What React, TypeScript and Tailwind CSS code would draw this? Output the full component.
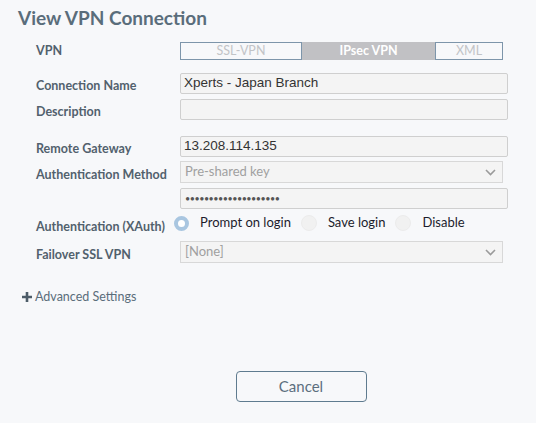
const lato = { fontFamily: 'Lato, "Open Sans", sans-serif' }

function Label({ children, className = 'pt-[5px]' }: { children?: React.ReactNode; className?: string }) {
  return (
    <div className={`w-[144px] shrink-0 text-[12.5px] font-bold leading-[14px] text-[#52616d] ${className}`}>{children}</div>
  )
}

function TextBox({ value = '' }: { value?: string }) {
  return (
    <div className="flex h-[21px] w-[328px] items-center rounded-[2px] border border-[#cfcfcf] bg-[#f4f4f4] px-[3px] text-[13.5px] text-[#333] [font-family:'Liberation_Sans',Arial,sans-serif]">
      {value}
    </div>
  )
}

function SelectBox({ value }: { value: string }) {
  return (
    <div className="flex h-[22px] w-[323px] items-center justify-between border border-[#d8d8d8] bg-[#f4f4f4] pl-[4px] pr-[6px] text-[13px] text-[#a0a0a0]">
      <span>{value}</span>
      <svg width="11" height="7" viewBox="0 0 11 7" fill="none">
        <path d="M1 1l4.5 4.5L10 1" stroke="#9a9a9a" strokeWidth="1.6" />
      </svg>
    </div>
  )
}

function Radio({ checked, label }: { checked?: boolean; label: string }) {
  return (
    <div className="flex items-center">
      {checked ? (
        <span className="h-[15px] w-[15px] rounded-full border-[4px] border-[#a9c6e0] bg-white" />
      ) : (
        <span className="h-[16px] w-[16px] rounded-full border border-[#ececec] bg-[#f1f1f1]" />
      )}
      <span className="ml-[11px] text-[13px] text-[#1c1c2c]">{label}</span>
    </div>
  )
}

export default function App() {
  return (
    <div className="h-[423px] w-full bg-[#f7f8fa]" style={lato}>
      <h1 className="pl-[18px] pt-[5px] text-[19px] font-bold leading-[26px] text-[#5a6d7b]">View VPN Connection</h1>

      <div className="pl-[36px]">
        <div className="mt-[11px] flex h-[18px] items-center">
          <Label className="">VPN</Label>
          <div className="flex h-[18px] text-[12.5px]">
            <div className="flex w-[122px] items-center justify-center border border-[#7d95aa] text-[#c2c4c7]">SSL-VPN</div>
            <div className="flex w-[133px] items-center justify-center bg-[#c1c1c4] font-bold text-white">IPsec VPN</div>
            <div className="flex w-[68px] items-center justify-center border border-[#7d95aa] text-[#c2c4c7]">XML</div>
          </div>
        </div>

        <div className="mt-[13px] flex items-center">
          <Label>Connection Name</Label>
          <TextBox value="Xperts - Japan Branch" />
        </div>
        <div className="mt-[5px] flex items-center">
          <Label>Description</Label>
          <TextBox />
        </div>
        <div className="mt-[16px] flex items-center">
          <Label>Remote Gateway</Label>
          <TextBox value="13.208.114.135" />
        </div>
        <div className="mt-[4px] flex items-center">
          <Label>Authentication Method</Label>
          <SelectBox value="Pre-shared key" />
        </div>
        <div className="mt-[5px] flex items-center">
          <Label />
          <div className="flex h-[21px] w-[328px] items-center rounded-[2px] border border-[#cfcfcf] bg-[#f4f4f4] px-[4px] text-[9px] leading-none tracking-[-0.5px] text-[#555]">
            ••••••••••••••••••••
          </div>
        </div>
        <div className="mt-[3px] flex items-center">
          <Label className="pt-[8px]">Authentication (XAuth)</Label>
          <div className="-ml-[6px] flex items-center gap-[10px]">
            <Radio checked label="Prompt on login" />
            <Radio label="Save login" />
            <Radio label="Disable" />
          </div>
        </div>
        <div className="mt-[7px] flex items-center">
          <Label>Failover SSL VPN</Label>
          <SelectBox value="[None]" />
        </div>
      </div>

      <div className="mt-[25px] flex items-center pl-[22px] text-[12.5px] text-[#5a6d7b]">
        <svg width="10" height="10" viewBox="0 0 10 10" className="mr-[3px]">
          <path d="M5 0v10M0 5h10" stroke="#4d5c68" strokeWidth="2.6" />
        </svg>
        Advanced Settings
      </div>

      <div className="mt-[64px] flex justify-center">
        <button className="ml-[66px] h-[31px] w-[131px] rounded-[4px] border border-[#5f7b8f] bg-[#f7f8fa] text-[15px] text-[#5c6f7e]">
          Cancel
        </button>
      </div>
    </div>
  )
}
